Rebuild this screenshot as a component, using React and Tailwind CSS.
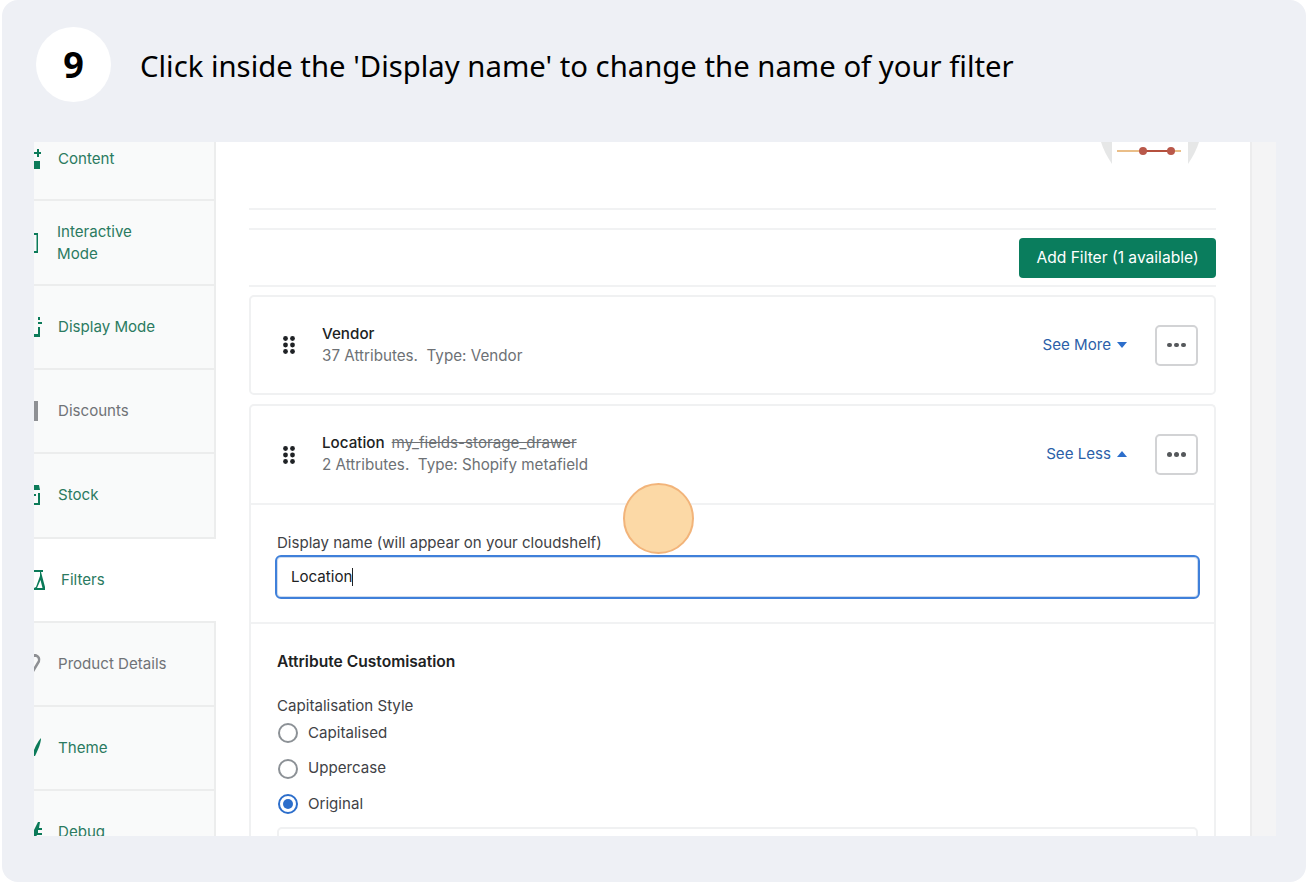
const ui = { fontFamily: 'Inter, sans-serif' };

function Grip() {
  return (
    <svg width="14" height="20" viewBox="0 0 14 20" className="fill-[#1f2225] shrink-0">
      <circle cx="3.5" cy="3.5" r="2.4" />
      <circle cx="10.5" cy="3.5" r="2.4" />
      <circle cx="3.5" cy="10" r="2.4" />
      <circle cx="10.5" cy="10" r="2.4" />
      <circle cx="3.5" cy="16.5" r="2.4" />
      <circle cx="10.5" cy="16.5" r="2.4" />
    </svg>
  );
}

function MoreButton() {
  return (
    <div className="w-[43px] h-[41px] rounded-[5px] border-2 border-[#d2d3d5] bg-white flex items-center justify-center gap-[2.5px]">
      <span className="w-[4.5px] h-[4.5px] rounded-full bg-[#55585b]" />
      <span className="w-[4.5px] h-[4.5px] rounded-full bg-[#55585b]" />
      <span className="w-[4.5px] h-[4.5px] rounded-full bg-[#55585b]" />
    </div>
  );
}

function Caret({ up }) {
  return (
    <svg width="10" height="6" viewBox="0 0 10 6" className="fill-[#2c6ecb]">
      <path d={up ? 'M0 6 L5 0 L10 6 Z' : 'M0 0 L10 0 L5 6 Z'} />
    </svg>
  );
}

function Radio({ label, checked }) {
  return (
    <div className="flex items-center h-[20px] gap-[10px] ml-[1px]">
      {checked ? (
        <span className="w-[20px] h-[20px] rounded-full border-2 border-[#2c6ecb] flex items-center justify-center">
          <span className="w-[10px] h-[10px] rounded-full bg-[#2c6ecb]" />
        </span>
      ) : (
        <span className="w-[20px] h-[20px] rounded-full border-2 border-[#8c9196]" />
      )}
      <span className="text-[15.1px] text-[#3f4246]">{label}</span>
    </div>
  );
}

function SideIcon({ name, color }) {
  const icons = {
    content: <path d="M0 3 H3 V0 H5 V3 H7 V5 H5 V8 H3 V5 H0 Z M0 12 H6 V20 H0 Z" />,
    interactive: <path d="M0 0 H4 V20 H0 V18 H2.5 V2 H0 Z" />,
    display: <path d="M4 0 H6 V3 H4 Z M4 5 H8 V7 H4 Z M4 10 H6 V20 H0 V17 H4 Z" />,
    discounts: <path d="M0 0 H4 V20 H0 Z" />,
    stock: <path d="M0 0 H5 L6 5 H0 Z M4 8 H6 V20 H0 V18 H4 Z M0 9 H2 V11 H0 Z" />,
    filters: <path d="M0 0 H9 V2 H7 L11 17 V20 H0 V18 L2 17 L6 6 V2 H0 Z M3 18 H8.5 L6.5 10 Z" />,
    product: <path d="M0 0 H2 A6 6 0 0 1 6 8 L0 18 V13 L3 8 A3 3 0 0 0 2 3 H0 Z" />,
    theme: <path d="M0 12 C2 7 5 2 7 0 C7 5 4 12 1 18 L0 18 Z" />,
    debug: <path d="M4 0 H6 L5 6 H8 V8 H4 V11 H8 V13 H3 L0 18 V8 Z" />,
  };
  return (
    <svg width="12" height="20" viewBox="0 0 12 20" style={{ fill: color }} className="shrink-0">
      {icons[name]}
    </svg>
  );
}

function SideItem({ icon, label, gray, active, height = 'h-[84px]', pad = 'pl-[12px]', shift = '', children }) {
  const textColor = gray ? 'text-[#707377]' : 'text-[#2b7a61]';
  const iconColor = gray ? '#8e9094' : '#0b7a59';
  return (
    <div className={`${height} shrink-0 flex items-center border-b-2 border-[#eceded] ${active ? 'bg-white' : 'bg-[#f9fafa] border-r-2'}`}>
      <div className={`w-[12px] ${shift}`}>
        <SideIcon name={icon} color={iconColor} />
      </div>
      <div className={`${pad} ${shift} text-[15.1px] leading-[22px] ${textColor}`}>{children || label}</div>
    </div>
  );
}

function FilterHead({ title, code, sub, link, up, height }) {
  return (
    <div className={`${height} pl-[31px] pr-[16px] flex items-center`}>
      <Grip />
      <div className="ml-[26px] flex-1 mt-[-1px]">
        <div className="text-[15.2px] leading-[22px] font-medium text-[#202223]">
          {title}
          {code && <span className="ml-[7px] font-normal text-[#6d7175] line-through">{code}</span>}
        </div>
        <div className="text-[15.2px] leading-[22px] text-[#6d7175] whitespace-pre">{sub}</div>
      </div>
      <div className="flex items-center gap-[6px] text-[15.1px] text-[#2c5fa8] mr-[28px]">
        {link}
        <Caret up={up} />
      </div>
      <MoreButton />
    </div>
  );
}

export default function App() {
  return (
    <div className="relative w-[1306px] h-[882px] bg-white overflow-hidden" style={ui}>
      <div className="ml-[2px] h-[882px] bg-[#eef0f5] rounded-[16px] flex flex-col">
        <div className="h-[142px] shrink-0 pl-[34px] pt-[27px] flex items-start">
          <div className="w-[75px] h-[75px] rounded-full bg-white flex items-center justify-center text-[36px] font-bold text-black font-['Noto_Sans',sans-serif]">
            9
          </div>
          <div className="ml-[29px] mt-[17px] text-[29.3px] leading-[44px] text-black whitespace-nowrap font-['Noto_Sans',sans-serif]">
            Click inside the 'Display name' to change the name of your filter
          </div>
        </div>

        <div className="ml-[32px] mr-[30px] h-[694px] shrink-0 flex overflow-hidden bg-white">
          <div className="w-[182px] shrink-0 flex flex-col">
            <SideItem icon="content" label="Content" height="h-[59px]" shift="mt-[-23px]" />
            <SideItem icon="interactive" pad="pl-[11px]" height="h-[85px]">Interactive<br />Mode</SideItem>
            <SideItem icon="display" label="Display Mode" />
            <SideItem icon="discounts" label="Discounts" gray />
            <SideItem icon="stock" label="Stock" height="h-[85px]" shift="mt-[-2px]" />
            <SideItem icon="filters" label="Filters" active pad="pl-[15px]" shift="mt-[-1px]" />
            <SideItem icon="product" label="Product Details" gray />
            <SideItem icon="theme" label="Theme" />
            <SideItem icon="debug" label="Debug" />
          </div>

          <div className="w-[1034px] shrink-0 pl-[33px] pr-[34px]">
            <div className="h-[68px] border-b-2 border-[#f1f2f3] flex justify-end items-start pr-[17px]">
              <svg width="98" height="23" viewBox="0 0 98 23">
                <path d="M0 0 H11 V22 Q3 10 0 0 Z" fill="#e6e7e7" />
                <path d="M87 0 H98 Q95 10 87 22 Z" fill="#e6e7e7" />
                <path d="M16 9 H80" stroke="#e3a860" strokeWidth="1.5" />
                <path d="M42 9 H70" stroke="#b5503d" strokeWidth="2" />
                <circle cx="42" cy="9" r="4" fill="#b9584a" />
                <circle cx="70" cy="9" r="4" fill="#b9584a" />
              </svg>
            </div>
            <div className="h-[20px] border-b-2 border-[#f1f2f3]" />
            <div className="h-[57px] pt-[8px] border-b-2 border-[#f1f2f3] flex justify-end items-start">
              <div className="w-[197px] h-[40px] rounded-[4px] bg-[#0a7d5d] text-white text-[15.6px] flex items-center justify-center">
                Add Filter (1 available)
              </div>
            </div>

            <div className="mt-[8px] h-[100px] rounded-[5px] border-2 border-[#f0f1f2] bg-white overflow-hidden">
              <FilterHead height="h-[96px]" title="Vendor" sub="37 Attributes.  Type: Vendor" link="See More" />
            </div>

            <div className="mt-[9px] rounded-t-[5px] border-2 border-b-0 border-[#f0f1f2] bg-white">
              <FilterHead height="h-[97px]" title="Location" code="my_fields-storage_drawer" sub="2 Attributes.  Type: Shopify metafield" link="See Less" up />
              <div className="h-[121px] border-y-2 border-[#f1f2f3] pl-[26px] pr-[16px] pt-[27px]">
                <div className="text-[15.05px] leading-[22px] text-[#3f4246]">Display name (will appear on your cloudshelf)</div>
                <div className="mt-[1px] h-[44px] ml-[-2px] mr-[-2px] rounded-[6px] border-2 border-[#3f80da] shadow-[inset_0_0_0_1px_#cfdcee] flex items-center pl-[14px] text-[15.1px] text-[#202223]">
                  Location
                  <span className="w-[1px] h-[18px] bg-[#202223]" />
                </div>
              </div>
              <div className="pl-[26px] pr-[16px] pt-[27px]">
                <div className="text-[15.6px] leading-[22px] font-semibold text-[#202223]">Attribute Customisation</div>
                <div className="mt-[22px] text-[15.1px] leading-[22px] text-[#3f4246]">Capitalisation Style</div>
                <div className="mt-[6px] flex flex-col gap-[15.5px]">
                  <Radio label="Capitalised" />
                  <Radio label="Uppercase" />
                  <Radio label="Original" checked />
                </div>
                <div className="mt-[13px] h-[40px] rounded-t-[5px] border-2 border-[#f0f1f2]" />
              </div>
            </div>
          </div>

          <div className="w-[26px] shrink-0 bg-[#f4f4f5] border-l-2 border-[#ececed]" />
        </div>
      </div>

      <div className="absolute left-[623px] top-[483px] w-[71px] h-[71px] rounded-full bg-[#fcd9a6] border-2 border-[#f2b47a]" />
    </div>
  );
}
